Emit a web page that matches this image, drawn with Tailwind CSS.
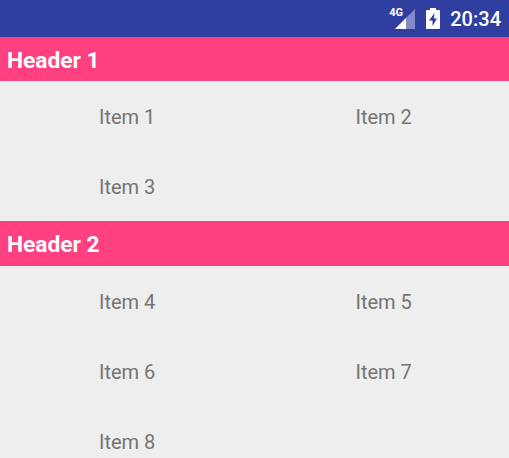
<!DOCTYPE html>
<html lang="en">
<head>
  <meta charset="UTF-8">
  <title>Grid</title>
  <script src="https://cdn.jsdelivr.net/npm/@tailwindcss/browser@4"></script>
</head>
<body class="h-[458px] overflow-hidden bg-[#eeeeee] font-['Roboto',sans-serif]">
  <!-- status bar -->
  <div class="h-[37px] bg-[#303f9f] flex items-center justify-end pr-2 text-white">
    <div class="relative w-[26px] h-[37px] mr-[11px]">
      <span class="absolute left-0 top-[7px] text-[11px] leading-[11px] font-bold">4G</span>
      <svg class="absolute left-[6px] top-[9px] w-[20px] h-[20px]" viewBox="0 0 20 20">
        <path d="M0 20 L20 0 V20 Z" fill="#fff" fill-opacity="0.4"/>
        <path d="M0 20 L11 9 V20 Z" fill="#fff"/>
      </svg>
    </div>
    <svg class="w-[14px] h-[21px] mr-[10px]" viewBox="0 0 14 21">
      <path fill-rule="evenodd" d="M4 0h6v2h3a1 1 0 0 1 1 1v17a1 1 0 0 1-1 1H1a1 1 0 0 1-1-1V3a1 1 0 0 1 1-1h3z M8.500 5 L3 12.500H6.500V18L11 10.500H8z" fill="#fff"/>
    </svg>
    <span class="text-[20px] leading-none font-medium">20:34</span>
  </div>
  <div class="h-[44px] pt-[4px] bg-[#ff4081] flex items-center px-[7px] text-white text-[22.75px] font-bold">Header 1</div>
  <div class="grid grid-cols-2 h-[140px] text-[20px] text-[#757575]">
    <div class="h-[70px] pt-[2px] flex items-center pl-[99px]">Item 1</div>
    <div class="h-[70px] pt-[2px] flex items-center pl-[101px]">Item 2</div>
    <div class="h-[70px] pt-[2px] flex items-center pl-[99px]">Item 3</div>
  </div>
  <div class="h-[45px] pt-[4px] bg-[#ff4081] flex items-center px-[7px] text-white text-[22.75px] font-bold">Header 2</div>
  <div class="grid grid-cols-2 text-[20px] text-[#757575]">
    <div class="h-[70px] pt-[2px] flex items-center pl-[99px]">Item 4</div>
    <div class="h-[70px] pt-[2px] flex items-center pl-[101px]">Item 5</div>
    <div class="h-[70px] pt-[2px] flex items-center pl-[99px]">Item 6</div>
    <div class="h-[70px] pt-[2px] flex items-center pl-[101px]">Item 7</div>
    <div class="h-[70px] pt-[2px] flex items-center pl-[99px]">Item 8</div>
  </div>
</body>
</html>
